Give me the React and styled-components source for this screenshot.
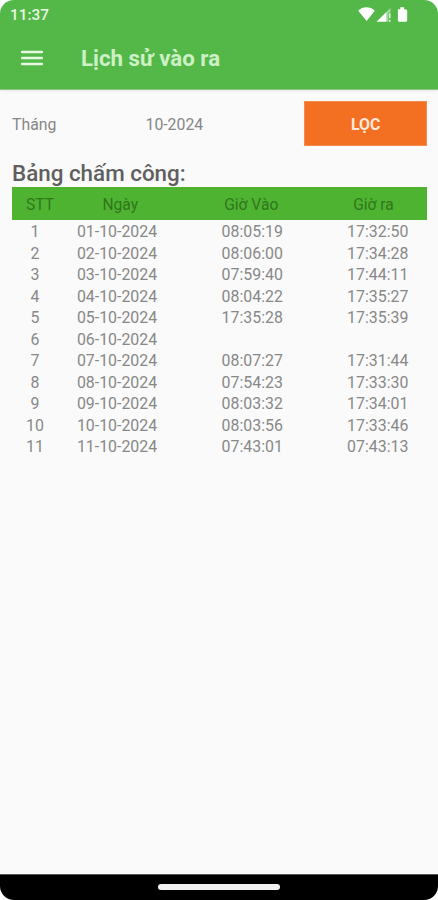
import React from 'react';
import styled, { createGlobalStyle } from 'styled-components';

const GlobalStyle = createGlobalStyle`
  * { box-sizing: border-box; }
  body { margin: 0; background: #fff; font-family: Roboto, "Noto Sans", sans-serif; }
`;

const Phone = styled.div`
  width: 438px;
  height: 900px;
  display: flex;
  flex-direction: column;
  overflow: hidden;
  border-radius: 14px;
  background: #fafafa;
`;

const TopArea = styled.header`
  flex: none;
  height: 90px;
  background: #53b848;
  border-bottom: 1px solid #8fc489;
  box-shadow: 0 1px 3px rgba(0, 0, 0, 0.08);
`;

const StatusBar = styled.div`
  height: 28px;
  padding: 1px 30px 0 10px;
  display: flex;
  align-items: center;
  justify-content: space-between;
  color: #e6f7e3;
  font-size: 15.4px;
  font-weight: 500;
`;

const StatusIcons = styled.svg`
  display: block;
  width: 52px;
  height: 18px;
  margin-top: -2px;
`;

const AppBar = styled.div`
  height: 60px;
  padding-left: 21px;
  display: flex;
  align-items: center;
  gap: 38px;
`;

const MenuIcon = styled.svg`
  display: block;
  width: 22px;
  height: 16px;
`;

const Title = styled.h1`
  margin: 0;
  color: #cdf0c6;
  font-size: 22.3px;
  font-weight: 700;
  line-height: 28px;
`;

const Content = styled.main`
  flex: 1;
  padding: 11px 11px 0 12px;
`;

const FilterRow = styled.div`
  display: grid;
  grid-template-columns: 133.5px 1fr 123.5px;
  align-items: center;
  height: 45px;
  color: #868686;
  font-size: 15.8px;
`;

const FilterLabel = styled.span`
  padding-top: 2px;
`;

const FilterButton = styled.button`
  height: 45px;
  padding: 2px 0 0 1px;
  border: 1px solid #f58a4c;
  background: #f36f21;
  color: #ffe9dc;
  font: 700 15.9px Roboto, sans-serif;
`;

const Heading = styled.h2`
  margin: 14px 0 0;
  height: 27px;
  color: #5f5f5f;
  font-size: 22.4px;
  font-weight: 500;
  line-height: 27px;
`;

const Row = styled.div`
  display: grid;
  grid-template-columns: 46px 118px 152.5px 1fr;
  height: 21.5px;
  line-height: 21.5px;
  color: #888;
  font-size: 15.9px;
  text-align: center;
`;

const HeaderRow = styled(Row)`
  grid-template-columns: 56px 104.5px 157.5px 87px;
  height: 33px;
  margin-bottom: 1px;
  padding-top: 1px;
  line-height: 34px;
  background: #4fb332;
  color: #2f761c;
  font-size: 15.6px;
`;

const NavBar = styled.footer`
  flex: none;
  height: 26px;
  display: flex;
  justify-content: center;
  align-items: center;
  background: #000;
  border-top: 1px solid #555;
`;

const HomeHandle = styled.div`
  width: 122px;
  height: 6px;
  margin-top: -1px;
  border-radius: 3px;
  background: #f2f2f2;
`;

const records = [
  ['01-10-2024', '08:05:19', '17:32:50'],
  ['02-10-2024', '08:06:00', '17:34:28'],
  ['03-10-2024', '07:59:40', '17:44:11'],
  ['04-10-2024', '08:04:22', '17:35:27'],
  ['05-10-2024', '17:35:28', '17:35:39'],
  ['06-10-2024', '', ''],
  ['07-10-2024', '08:07:27', '17:31:44'],
  ['08-10-2024', '07:54:23', '17:33:30'],
  ['09-10-2024', '08:03:32', '17:34:01'],
  ['10-10-2024', '08:03:56', '17:33:46'],
  ['11-10-2024', '07:43:01', '07:43:13'],
];

export default function App() {
  return (
    <>
      <GlobalStyle />
      <Phone>
        <TopArea>
          <StatusBar>
            <span>11:37</span>
            <StatusIcons viewBox="0 0 52 18" fill="#fff">
              <path d="M2.3 5.7C6.5 1.2 14.3 1.2 18.8 5.7L10.6 16Z" />
              <path d="M20.5 16.8L30.4 7V16.8Z" />
              <path d="M30.4 7L34.4 3V7.6H32.4V16.8H30.4Z" opacity=".5" />
              <path d="M33.2 8.3h1.3v5h-1.3zM33.2 14.8h1.3v2h-1.3z" />
              <path d="M41.9 4.3H44.3V2.2H48.1V4.3H49.3Q51.2 4.3 51.2 6V15.2Q51.2 16.8 49.6 16.8H43.4Q41.9 16.8 41.9 15.2Z" />
            </StatusIcons>
          </StatusBar>
          <AppBar>
            <MenuIcon viewBox="0 0 22 16" stroke="#e6f8e2" strokeWidth="2.4" strokeLinecap="round">
              <path d="M1 2H21M1 8H21M1 14H21" />
            </MenuIcon>
            <Title>Lịch sử vào ra</Title>
          </AppBar>
        </TopArea>
        <Content>
          <FilterRow>
            <FilterLabel>Tháng</FilterLabel>
            <FilterLabel>10-2024</FilterLabel>
            <FilterButton>LỌC</FilterButton>
          </FilterRow>
          <Heading>Bảng chấm công:</Heading>
          <HeaderRow>
            <span>STT</span>
            <span>Ngày</span>
            <span>Giờ Vào</span>
            <span>Giờ ra</span>
          </HeaderRow>
          {records.map(([date, timeIn, timeOut], i) => (
            <Row key={date}>
              <span>{i + 1}</span>
              <span>{date}</span>
              <span>{timeIn}</span>
              <span>{timeOut}</span>
            </Row>
          ))}
        </Content>
        <NavBar>
          <HomeHandle />
        </NavBar>
      </Phone>
    </>
  );
}
